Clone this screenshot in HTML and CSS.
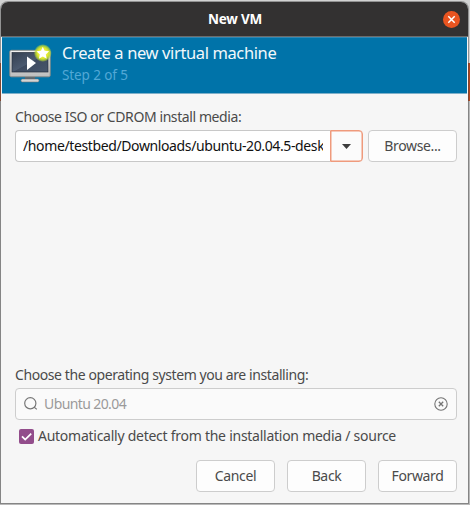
FILE: index.html
```html
<!DOCTYPE html>
<html lang="en">
<head>
<meta charset="utf-8">
<title>New VM</title>
<link rel="stylesheet" href="styles.css">
</head>
<body>
<div class="window">
  <header class="titlebar">
    <h1 class="title">New VM</h1>
    <button class="close" aria-label="Close"><svg width="17" height="17" viewBox="0 0 17 17"><path d="M5.3 5.3l6.4 6.4M11.7 5.3l-6.4 6.4" stroke="#fff" stroke-width="1.5"/></svg></button>
  </header>
  <section class="banner">
    <svg class="monitor" width="44" height="42" viewBox="0 0 44 42">
      <defs>
        <linearGradient id="frame" x1="0" y1="0" x2="0" y2="1"><stop offset="0" stop-color="#f4f4f4"/><stop offset="1" stop-color="#bdbdbd"/></linearGradient>
        <linearGradient id="screen" x1="0" y1="0" x2="1" y2="1"><stop offset="0" stop-color="#333f50"/><stop offset=".5" stop-color="#4b5a70"/><stop offset=".52" stop-color="#3e4b60"/><stop offset="1" stop-color="#46556b"/></linearGradient>
        <radialGradient id="glow"><stop offset="0" stop-color="#fff78a"/><stop offset=".6" stop-color="#dfe82a"/><stop offset=".8" stop-color="#b9d936" stop-opacity=".8"/><stop offset="1" stop-color="#b9d936" stop-opacity="0"/></radialGradient>
      </defs>
      <path d="M16 32h10v4H16z" fill="#58616a"/>
      <rect x="12" y="35" width="18" height="3" rx="1.5" fill="#d5d5d5" stroke="#777" stroke-width=".6"/>
      <rect x=".8" y="6.3" width="40.4" height="26.5" rx="1.5" fill="url(#frame)" stroke="#8b8b86" stroke-width=".9"/>
      <rect x="3" y="8.5" width="36" height="19.5" fill="url(#screen)" stroke="#26303d" stroke-width=".7"/>
      <path d="M18 12.5l9 6.5-9 7z" fill="#fff"/>
      <circle cx="33.8" cy="9" r="9" fill="url(#glow)"/>
      <path d="M33.8 2.7l1.8 4.1 4.5.5-3.3 3.1.9 4.4-3.9-2.2-3.9 2.2.9-4.4-3.3-3.1 4.5-.5z" fill="#fff"/>
    </svg>
    <div class="heading">
      <h2 class="headline">Create a new virtual machine</h2>
      <p class="step">Step 2 of 5</p>
    </div>
  </section>
  <main class="content">
    <div class="label media-label">Choose ISO or CDROM install media:</div>
    <div class="media-row">
      <div class="combo">
        <div class="path"><span class="path-text">/home/testbed/Downloads/ubuntu-20.04.5-desk</span></div>
        <button class="drop" aria-label="Open list"><svg width="9" height="5" viewBox="0 0 9 5"><path d="M0 0h9L4.5 5z" fill="#3d3d3d"/></svg></button>
      </div>
      <button class="btn browse"><span>Browse...</span></button>
    </div>
    <div class="spacer"></div>
    <div class="label os-label">Choose the operating system you are installing:</div>
    <div class="search">
      <svg width="14" height="14" viewBox="0 0 14 14" fill="none" stroke="#777" stroke-width="1.2"><circle cx="6.3" cy="6.3" r="5.6"/><path d="M10.2 10.2l2.7 2.2"/></svg>
      <span class="search-text">Ubuntu 20.04</span>
      <svg class="clear" width="14" height="14" viewBox="0 0 14 14" fill="none" stroke="#747474" stroke-width="1.1"><circle cx="7" cy="7" r="6.2"/><path d="M4.8 4.8l4.4 4.4M9.2 4.8L4.8 9.2" stroke-width="1.3"/></svg>
    </div>
    <div class="check-row">
      <span class="check"><svg width="15" height="15" viewBox="0 0 15 15"><path d="M3 7.4l3.2 3.2 6-6" fill="none" stroke="#fff" stroke-width="1.8"/></svg></span>
      <span class="check-label">Automatically detect from the installation media / source</span>
    </div>
    <footer class="actions">
      <button class="btn cancel"><span>Cancel</span></button>
      <button class="btn back"><span>Back</span></button>
      <button class="btn forward"><span>Forward</span></button>
    </footer>
  </main>
</div>
</body>
</html>
```
FILE: styles.css
```css
* { box-sizing: border-box; }
body {
  margin: 0;
  height: 505px;
  padding: 1px 1px 1px 0;
  overflow: hidden;
  background: linear-gradient(#d2d2d2 0 63px, #b5451c 63px 101px, #b9b9b9 101px);
  font: 14px/20px "Noto Sans", sans-serif;
  letter-spacing: -.35px;
  color: #4a4a4a;
}
h1, h2, p { margin: 0; font-weight: 400; }
button { font: inherit; letter-spacing: inherit; color: inherit; padding: 0; margin: 0; }
svg { display: block; flex: none; }
.window {
  display: flex;
  flex-direction: column;
  width: 469px;
  height: 503px;
  border: 1px solid rgba(70, 70, 70, .45);
  border-radius: 8px 8px 0 0;
  background: #f6f6f6 padding-box;
  overflow: hidden;
}
.titlebar {
  display: grid;
  grid-template-columns: 36px 1fr 36px;
  align-items: center;
  height: 35px;
  flex: none;
  background: #333131;
  border-bottom: 1px solid #6c6c6c;
}
.title {
  grid-column: 2;
  text-align: center;
  font-size: 13.5px;
  line-height: 20px;
  letter-spacing: -.25px;
  font-weight: 700;
  color: #fff;
  padding-left: 1px;
}
.close {
  width: 17px;
  height: 17px;
  border: 0;
  border-radius: 50%;
  margin-left: 11px;
  background: #e95420;
}
.banner {
  display: flex;
  height: 57px;
  flex: none;
  margin: 0 1px;
  padding-left: 7px;
  background: #0073a9;
  border-top: 1px solid #2e88b5;
  border-bottom: 1px solid #7fb0c9;
}
.monitor { margin-top: 6px; }
.heading { padding: 3px 0 0 9px; white-space: nowrap; }
.headline { font-size: 16.5px; line-height: 23px; letter-spacing: -.38px; color: #f2f8fb; }
.step { font-size: 13.5px; line-height: 23px; letter-spacing: -.1px; color: #52a8d6; }
.content {
  display: flex;
  flex-direction: column;
  flex: 1;
  padding: 13px 11px 11px 14px;
  white-space: nowrap;
}
.label { height: 23px; letter-spacing: -.41px; }
.media-row { display: flex; gap: 5px; height: 32px; }
.combo { display: flex; width: 348px; }
.path {
  width: 315px;
  height: 32px;
  padding: 0 7px;
  border: 1px solid #c8c8c8;
  border-right: 0;
  border-radius: 4px 0 0 4px;
  background: #fff;
  color: #111;
  line-height: 29px;
  letter-spacing: -.38px;
}
.path-text { display: block; width: 300px; overflow: hidden; }
.drop {
  display: flex;
  align-items: center;
  justify-content: center;
  width: 33px;
  border: 1px solid #ef9a7c;
  box-shadow: inset 0 0 0 .5px #ef9a7c;
  border-radius: 0 4px 4px 0;
  background: #fbfbfb;
}
.btn {
  height: 32px;
  border: 1px solid #cdcdcd;
  border-radius: 4px;
  background: #fdfdfd;
  line-height: 28px;
}
.browse { width: 89px; }
.spacer { flex: 1; }
.search {
  display: flex;
  align-items: center;
  height: 32px;
  padding: 0 8px;
  border: 1px solid #cdcdcd;
  border-radius: 4px;
  background: #fafafa;
}
.search-text { margin-left: 6px; letter-spacing: -.6px; color: #9a9a9a; }
.clear { margin-left: auto; }
.check-row { display: flex; align-items: center; height: 32px; padding-left: 4px; }
.check { width: 15px; height: 15px; border-radius: 2px; background: #924d8b; }
.check-label { margin-left: 4px; letter-spacing: -.26px; }
.actions { display: flex; justify-content: flex-end; gap: 12px; margin-top: 8px; }
.actions .btn { width: 79px; }
```
